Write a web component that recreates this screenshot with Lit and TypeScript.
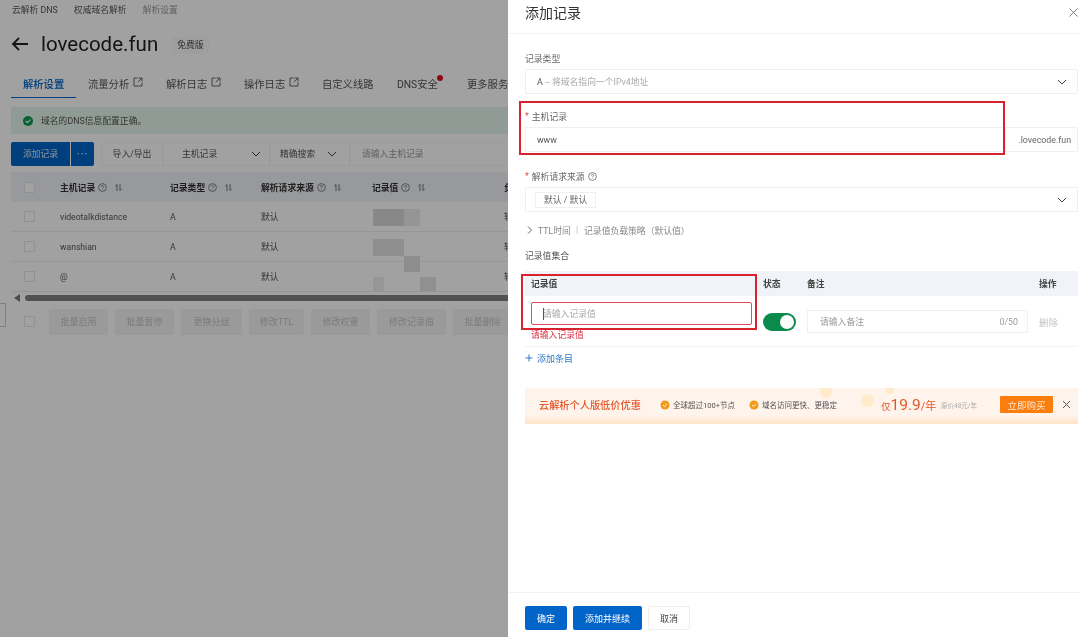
import { LitElement, html, css, svg } from "lit";
import { customElement } from "lit/decorators.js";

const chevron = html`<svg class="chev" width="10" height="10" viewBox="0 0 10 10"><path d="M1 3l4 4 4-4" fill="none" stroke="currentColor" stroke-width="1"/></svg>`;
const help = html`<svg class="help" width="9" height="9" viewBox="0 0 9 9"><circle cx="4.5" cy="4.5" r="3.9" fill="none" stroke="currentColor" stroke-width=".7"/><path d="M3.3 3.6c0-1.5 2.4-1.5 2.4 0 0 .9-1.2.8-1.2 1.7" fill="none" stroke="currentColor" stroke-width=".7"/><circle cx="4.5" cy="6.6" r=".4" fill="currentColor"/></svg>`;
const sort = html`<svg class="sort" width="9" height="9" viewBox="0 0 9 9"><path d="M3 8V1.5L1.3 3.2M6 1v6.5l1.7-1.7" fill="none" stroke="currentColor" stroke-width=".8"/></svg>`;
const external = html`<svg class="ext" width="10" height="10" viewBox="0 0 10 10"><path d="M4.5 1H1v8h8V5.5M5.5 1H9v3.5M9 1L4.8 5.2" fill="none" stroke="currentColor" stroke-width=".9"/></svg>`;
const medal = svg`<circle cx="5" cy="5" r="4.5" fill="#f39a1c"/><path d="M3 5l1.5 1.5L7 3.8" fill="none" stroke="#fff3d6" stroke-width="1"/>`;

const tabs = [
  { label: "解析设置", width: 65, active: true },
  { label: "流量分析", width: 78, ext: true },
  { label: "解析日志", width: 78, ext: true },
  { label: "操作日志", width: 78, ext: true },
  { label: "自定义线路", width: 75 },
  { label: "DNS安全", width: 70, dot: true },
  { label: "更多服务", width: 60 },
];
const rows = ["videotalkdistance", "wanshian", "@"];
const heads = ["主机记录", "记录类型", "解析请求来源", "记录值"];
const batch = [
  ["批量启用", 59], ["批量暂停", 59], ["更换分组", 61], ["修改TTL", 55],
  ["修改权重", 59], ["修改记录值", 69], ["批量删除", 59],
] as [string, number][];

@customElement("app-root")
export class AppRoot extends LitElement {
  static styles = css`
    :host {
      display: block;
      width: 1080px;
      height: 637px;
      overflow: hidden;
      font-family: Roboto, "Noto Sans CJK SC", sans-serif;
      font-size: 8.8px;
      color: #333;
      background: #fff;
    }
    * { box-sizing: border-box; }
    .app { display: flex; height: 637px; filter: blur(0.35px); }

    /* 左侧页面（被遮罩盖住） */
    .page { position: relative; width: 508px; height: 637px; flex: none; overflow: hidden; padding-left: 11px; background: #fff; }
    .mask { position: absolute; inset: 0; background: rgba(0, 0, 0, 0.37); }
    .crumbs { display: flex; height: 18px; gap: 16px; padding-left: 1px; align-items: center; color: #555; white-space: nowrap; }
    .crumbs .last { color: #999; }
    .title { display: flex; align-items: center; height: 34px; margin-top: 9px; }
    .title svg { flex: none; color: #222; }
    .title h1 { margin: 0 0 0 12px; font-size: 20.5px; line-height: 34px; font-weight: 400; color: #222; white-space: nowrap; }
    .title .tag { margin: 3px 0 0 14px; padding: 2px 5px; line-height: 13px; color: #444; background: #fbfbfb; }
    .tabs { display: flex; height: 26px; margin-top: 11px; white-space: nowrap; }
    .tab { display: flex; flex: none; height: 26px; padding: 0 0 3px 12px; align-items: center; font-size: 10.3px; color: #555; position: relative; }
    .tab.active { color: #0064c8; font-weight: 500; border-bottom: 1px solid #0064c8; }
    .ext { margin: -3px 0 0 4px; }
    .dot { position: absolute; left: 52px; top: 3px; width: 6px; height: 6px; border-radius: 50%; background: #e0101f; }
    .alert { display: flex; align-items: center; gap: 8px; height: 27px; margin-top: 9px; padding-left: 12px; background: #e3f6ea; color: #555; white-space: nowrap; }
    .toolbar { display: flex; height: 24px; margin-top: 8px; padding-bottom: 1px; white-space: nowrap; }
    .btn-main { display: flex; flex: none; height: 24px; align-items: center; justify-content: center; padding-bottom: 1px; background: #0064c8; color: #dfe8f2; border-radius: 2px 0 0 2px; width: 59px; }
    .btn-more { display: flex; flex: none; height: 24px; align-items: center; justify-content: center; background: #0064c8; color: #dfe8f2; margin-left: 1px; width: 23px; border-radius: 0 2px 2px 0; letter-spacing: 1px; font-weight: 700; }
    .seg { display: flex; flex: none; align-items: center; height: 24px; padding-bottom: 1px; background: #fff; color: #555; border: 1px solid #f6f6f6; justify-content: space-between; }
    .seg.io { width: 62px; margin-left: 7px; justify-content: center; }
    .seg.host { width: 107px; padding: 0 8px 1px 18px; }
    .seg.mode { width: 80px; padding: 0 12px 1px 9px; }
    .seg.query { width: 160px; padding-left: 11px; color: #999; }
    .grid { display: grid; grid-template-columns: 49px 110px 91px 111px 132px 40px; align-items: center; white-space: nowrap; }
    .thead { height: 30px; margin-top: 6px; background: #f0f3f7; font-weight: 700; color: #333; }
    .thead span { display: flex; align-items: center; }
    .help { margin-left: 3px; font-weight: 400; color: #555; }
    .sort { margin-left: 7px; color: #555; }
    .row { height: 30px; border-bottom: 1px solid #eee; color: #555; }
    .row .host { font-size: 8.6px; }
    .row:last-of-type { border-bottom: 0; }
    .check { display: block; width: 11px; height: 11px; margin-left: 13px; background: #fff; border: 1px solid #e6e6e6; }
    .cell { position: relative; height: 100%; display: flex; align-items: center; }
    .mosaic { position: absolute; background: #d6d6d6; }
    .m1 { left: 1px; top: 7px; width: 31px; height: 17px; background: #d8d8d8; }
    .m2 { left: 32px; top: 7px; width: 16px; height: 17px; background: #ececec; }
    .m3 { left: 1px; top: 7px; width: 31px; height: 17px; background: #e2e2e2; }
    .m4 { left: 32px; top: 24px; width: 16px; height: 16px; background: #e0e0e0; }
    .m5 { left: 48px; top: 15px; width: 16px; height: 14px; background: #e4e4e4; }
    .m6 { left: 1px; top: 15px; width: 11px; height: 14px; background: #f0f0f0; }
    .scroll { display: flex; align-items: center; height: 8px; margin-top: 2px; }
    .scroll i { width: 0; height: 0; margin-left: 3px; border: 4px solid transparent; border-left: 0; border-right: 6px solid #777; }
    .scroll b { display: block; flex: none; width: 490px; height: 6px; margin-left: 5px; border-radius: 3px; background: #808080; }
    .batch { display: flex; align-items: center; gap: 7px; height: 27px; margin-top: 6px; white-space: nowrap; }
    .batch .check { margin-right: 7px; flex: none; }
    .batch span { display: flex; flex: none; height: 26px; align-items: center; justify-content: center; background: #f4f4f4; color: #c4c4c4; font-size: 9px; border-radius: 1px; }
    .handle { position: absolute; left: 0; top: 303px; width: 6px; height: 24px; background: #fff; border: 1px solid #ccc; border-left: 0; }

    /* 右侧抽屉 */
    .drawer { position: relative; flex: none; width: 572px; height: 637px; background: #fff; display: flex; flex-direction: column; }
    .dhead { display: flex; flex: none; height: 34px; justify-content: space-between; padding: 0 2px 8px 17px; align-items: center; border-bottom: 1px solid #f2f2f2; }
    .dhead h2 { margin: 0; font-size: 14px; line-height: 20px; font-weight: 400; color: #333; }
    .dbody { flex: 1; padding: 0 2px 0 17px; }
    .label { display: flex; align-items: center; height: 14px; color: #666; }
    .label em { font-style: normal; color: #e34b4b; margin-right: 3px; }
    .box { display: flex; align-items: center; justify-content: space-between; height: 25px; margin-top: 4px; border: 1px solid #f0f0f0; padding: 0 10px 0 11px; color: #aaa; white-space: nowrap; border-radius: 1px; }
    .box b { font-weight: 400; color: #555; }
    .chev { flex: none; color: #444; }
    .l1 { margin-top: 17px; }
    .l3 { margin-top: 15px; }
    .l4 { margin-top: 17px; }
    .hostrow { display: flex; }
    .hostrow .box { flex: 1; color: #555; border-right: 0; }
    .suffix { display: flex; align-items: center; justify-content: flex-end; height: 25px; margin-top: 4px; width: 73px; padding-right: 6px; border: 1px solid #f0f0f0; color: #666; flex: none; }
    .chip { display: flex; align-items: center; height: 16px; margin-left: -2px; padding: 0 8px; border: 1px solid #f0f0f0; color: #666; white-space: pre; }
    .adv { display: flex; align-items: center; height: 14px; margin-top: 11px; color: #888; white-space: nowrap; }
    .adv svg { margin: 0 4px 0 1px; color: #666; }
    .adv u { text-decoration: none; margin: 0 6px 0 5px; color: #bbb; }
    .group { height: 14px; margin-top: 12px; color: #555; line-height: 14px; }
    .vhead { display: grid; grid-template-columns: 232px 44px 232px 1fr; height: 25px; margin-top: 8px; background: #f0f3f7; align-items: center; padding-left: 6px; font-weight: 700; color: #444; }
    .vrow { display: grid; grid-template-columns: 232px 44px 232px 1fr; height: 51px; padding-left: 6px; border-bottom: 1px solid #f2f2f2; }
    .vinput { display: flex; align-items: center; height: 23px; width: 221px; margin-top: 6px; border: 1px solid #e34b5b; border-radius: 2px; padding-left: 11px; color: #aaa; position: relative; }
    .vinput::before { content: ""; position: absolute; left: 11px; top: 5px; width: 1px; height: 12px; background: #555; }
    .verr { margin-top: 4px; line-height: 12px; color: #d93040; }
    .switch { display: flex; justify-content: flex-end; align-items: center; width: 33px; height: 18px; margin-top: 17px; padding-right: 2px; border-radius: 9px; background: #0a8a4b; }
    .switch i { display: block; width: 14px; height: 14px; border-radius: 50%; background: #fff; }
    .note { display: flex; align-items: center; justify-content: space-between; width: 221px; height: 23px; margin-top: 14px; padding: 0 9px 0 12px; border: 1px solid #f0f0f0; color: #999; }
    .del { margin-top: 19px; color: #c4c4c4; font-size: 9.5px; }
    .addrow { display: flex; align-items: center; gap: 4px; height: 14px; margin-top: 4px; color: #2a78c8; font-size: 9px; }
    .banner { position: relative; display: flex; align-items: center; height: 36px; margin-top: 23px; overflow: hidden; padding: 0 0 3px 14px; background: linear-gradient(180deg, #fff4ec 0%, #fff4ec 75%, #ffe3c6 100%); white-space: nowrap; }
    .banner h3 { margin: 0; width: 121px; flex: none; font-size: 10.2px; font-weight: 500; color: #e4572b; }
    .perk { display: flex; align-items: center; gap: 3px; font-size: 7.5px; color: #555; flex: none; }
    .perk.a { width: 89px; }
    .perk.b { width: 132px; }
    .price { flex: none; display: flex; align-items: baseline; color: #e4572b; font-size: 11px; width: 60px; }
    .price small { font-size: 9.5px; }
    .price strong { font-size: 15.5px; font-weight: 400; }
    .was { flex: none; width: 59px; font-size: 6.5px; color: #aaa; }
    .buy { display: flex; flex: none; align-items: center; justify-content: center; width: 53px; height: 17px; border-radius: 1px; background: #fb7d0e; color: #fde6cf; font-size: 9.5px; }
    .banner svg.x { margin-left: 9px; color: #555; }
    .blob { position: absolute; border-radius: 50%; background: #ffeacb; }
    .dfoot { display: flex; flex: none; gap: 6px; height: 45px; padding: 13px 0 0 17px; border-top: 1px solid #f2f2f2; }
    .dfoot span { display: flex; align-items: center; justify-content: center; height: 24px; border-radius: 2px; font-size: 9px; background: #0064c8; color: #fff; }
    .dfoot .ok { width: 42px; }
    .dfoot .more { width: 69px; }
    .dfoot .off { width: 42px; background: #fff; color: #444; border: 1px solid #eee; }
    .redbox { position: absolute; border: 2px solid #d8232f; pointer-events: none; }
    .r1 { left: 11px; top: 101px; width: 486px; height: 54px; }
    .r2 { left: 13px; top: 274px; width: 236px; height: 56px; }
  `;

  renderTab(t: (typeof tabs)[number]) {
    return html`<div class="tab ${t.active ? "active" : ""}" style="width:${t.width}px">
      ${t.label}${t.ext ? external : ""}${t.dot ? html`<i class="dot"></i>` : ""}
    </div>`;
  }

  renderPage() {
    return html`<section class="page">
      <div class="crumbs"><span>云解析 DNS</span><span>权威域名解析</span><span class="last">解析设置</span></div>
      <div class="title">
        <svg width="18" height="16" viewBox="0 0 18 16"><path d="M17 8H2M8 2L2 8l6 6" fill="none" stroke="currentColor" stroke-width="1.8"/></svg>
        <h1>lovecode.fun</h1>
        <span class="tag">免费版</span>
      </div>
      <nav class="tabs">${tabs.map((t) => this.renderTab(t))}</nav>
      <div class="alert">
        <svg width="10" height="10" viewBox="0 0 10 10"><circle cx="5" cy="5" r="5" fill="#0a9a55"/><path d="M2.7 5l1.7 1.7 3-3" fill="none" stroke="#fff" stroke-width="1.1"/></svg>
        <span>域名的DNS信息配置正确。</span>
      </div>
      <div class="toolbar">
        <span class="btn-main">添加记录</span><span class="btn-more">···</span>
        <span class="seg io">导入/导出</span>
        <span class="seg host">主机记录${chevron}</span>
        <span class="seg mode">精确搜索${chevron}</span>
        <span class="seg query">请输入主机记录</span>
      </div>
      <div class="grid thead">
        <i class="check"></i>
        ${heads.map((h) => html`<span>${h}${help}${sort}</span>`)}
        <span>负</span>
      </div>
      ${rows.map(
        (r, i) => html`<div class="grid row">
          <i class="check"></i><span class="host">${r}</span><span>A</span><span>默认</span>
          <div class="cell">
            ${i === 0 ? html`<i class="mosaic m1"></i><i class="mosaic m2"></i>` : ""}
            ${i === 1 ? html`<i class="mosaic m3"></i><i class="mosaic m4"></i>` : ""}
            ${i === 2 ? html`<i class="mosaic m5"></i><i class="mosaic m6"></i>` : ""}
          </div>
          <span>轮</span>
        </div>`
      )}
      <div class="scroll"><i></i><b></b></div>
      <div class="batch">
        <i class="check"></i>
        ${batch.map(([label, w]) => html`<span style="width:${w}px">${label}</span>`)}
      </div>
      <div class="handle"></div>
      <div class="mask"></div>
    </section>`;
  }

  renderBanner() {
    return html`<div class="banner">
      <i class="blob" style="left:336px;top:6px;width:13px;height:13px"></i>
      <i class="blob" style="left:295px;top:-2px;width:12px;height:12px"></i>
      <i class="blob" style="left:360px;top:-3px;width:9px;height:9px"></i>
      <h3>云解析个人版低价优惠</h3>
      <span class="perk a"><svg width="10" height="10" viewBox="0 0 10 10">${medal}</svg>全球超过100+节点</span>
      <span class="perk b"><svg width="10" height="10" viewBox="0 0 10 10">${medal}</svg>域名访问更快、更稳定</span>
      <span class="price"><small>仅</small><strong>19.9</strong>/年</span>
      <span class="was">原价48元/年</span>
      <span class="buy">立即购买</span>
      <svg class="x" width="9" height="9" viewBox="0 0 9 9"><path d="M1 1l7 7M8 1L1 8" fill="none" stroke="currentColor"/></svg>
    </div>`;
  }

  renderDrawer() {
    return html`<aside class="drawer">
      <header class="dhead">
        <h2>添加记录</h2>
        <svg width="9" height="9" viewBox="0 0 9 9" style="color:#666"><path d="M.5.5l8 8M8.5.5l-8 8" fill="none" stroke="currentColor" stroke-width=".8"/></svg>
      </header>
      <div class="dbody">
        <div class="label l1">记录类型</div>
        <div class="box"><span><b>A</b> -- 将域名指向一个IPv4地址</span>${chevron}</div>
        <div class="label l3"><em>*</em>主机记录</div>
        <div class="hostrow"><div class="box">www</div><div class="suffix">.lovecode.fun</div></div>
        <div class="label l4"><em>*</em>解析请求来源 ${help}</div>
        <div class="box"><span class="chip">默认 / 默认</span>${chevron}</div>
        <div class="adv">
          <svg width="8" height="8" viewBox="0 0 8 8"><path d="M2 .5L5.5 4 2 7.5" fill="none" stroke="currentColor"/></svg>
          TTL时间<u>|</u>记录值负载策略（默认值）
        </div>
        <div class="group">记录值集合</div>
        <div class="vhead"><span>记录值</span><span>状态</span><span>备注</span><span>操作</span></div>
        <div class="vrow">
          <div>
            <div class="vinput">请输入记录值</div>
            <div class="verr">请输入记录值</div>
          </div>
          <div><div class="switch"><i></i></div></div>
          <div><div class="note"><span>请输入备注</span><span>0/50</span></div></div>
          <div class="del">删除</div>
        </div>
        <div class="addrow"><svg width="8" height="8" viewBox="0 0 8 8"><path d="M4 .5v7M.5 4h7" fill="none" stroke="currentColor"/></svg>添加条目</div>
        ${this.renderBanner()}
      </div>
      <footer class="dfoot">
        <span class="ok">确定</span><span class="more">添加并继续</span><span class="off">取消</span>
      </footer>
      <div class="redbox r1"></div>
      <div class="redbox r2"></div>
    </aside>`;
  }

  render() {
    return html`<div class="app">${this.renderPage()}${this.renderDrawer()}</div>`;
  }
}
